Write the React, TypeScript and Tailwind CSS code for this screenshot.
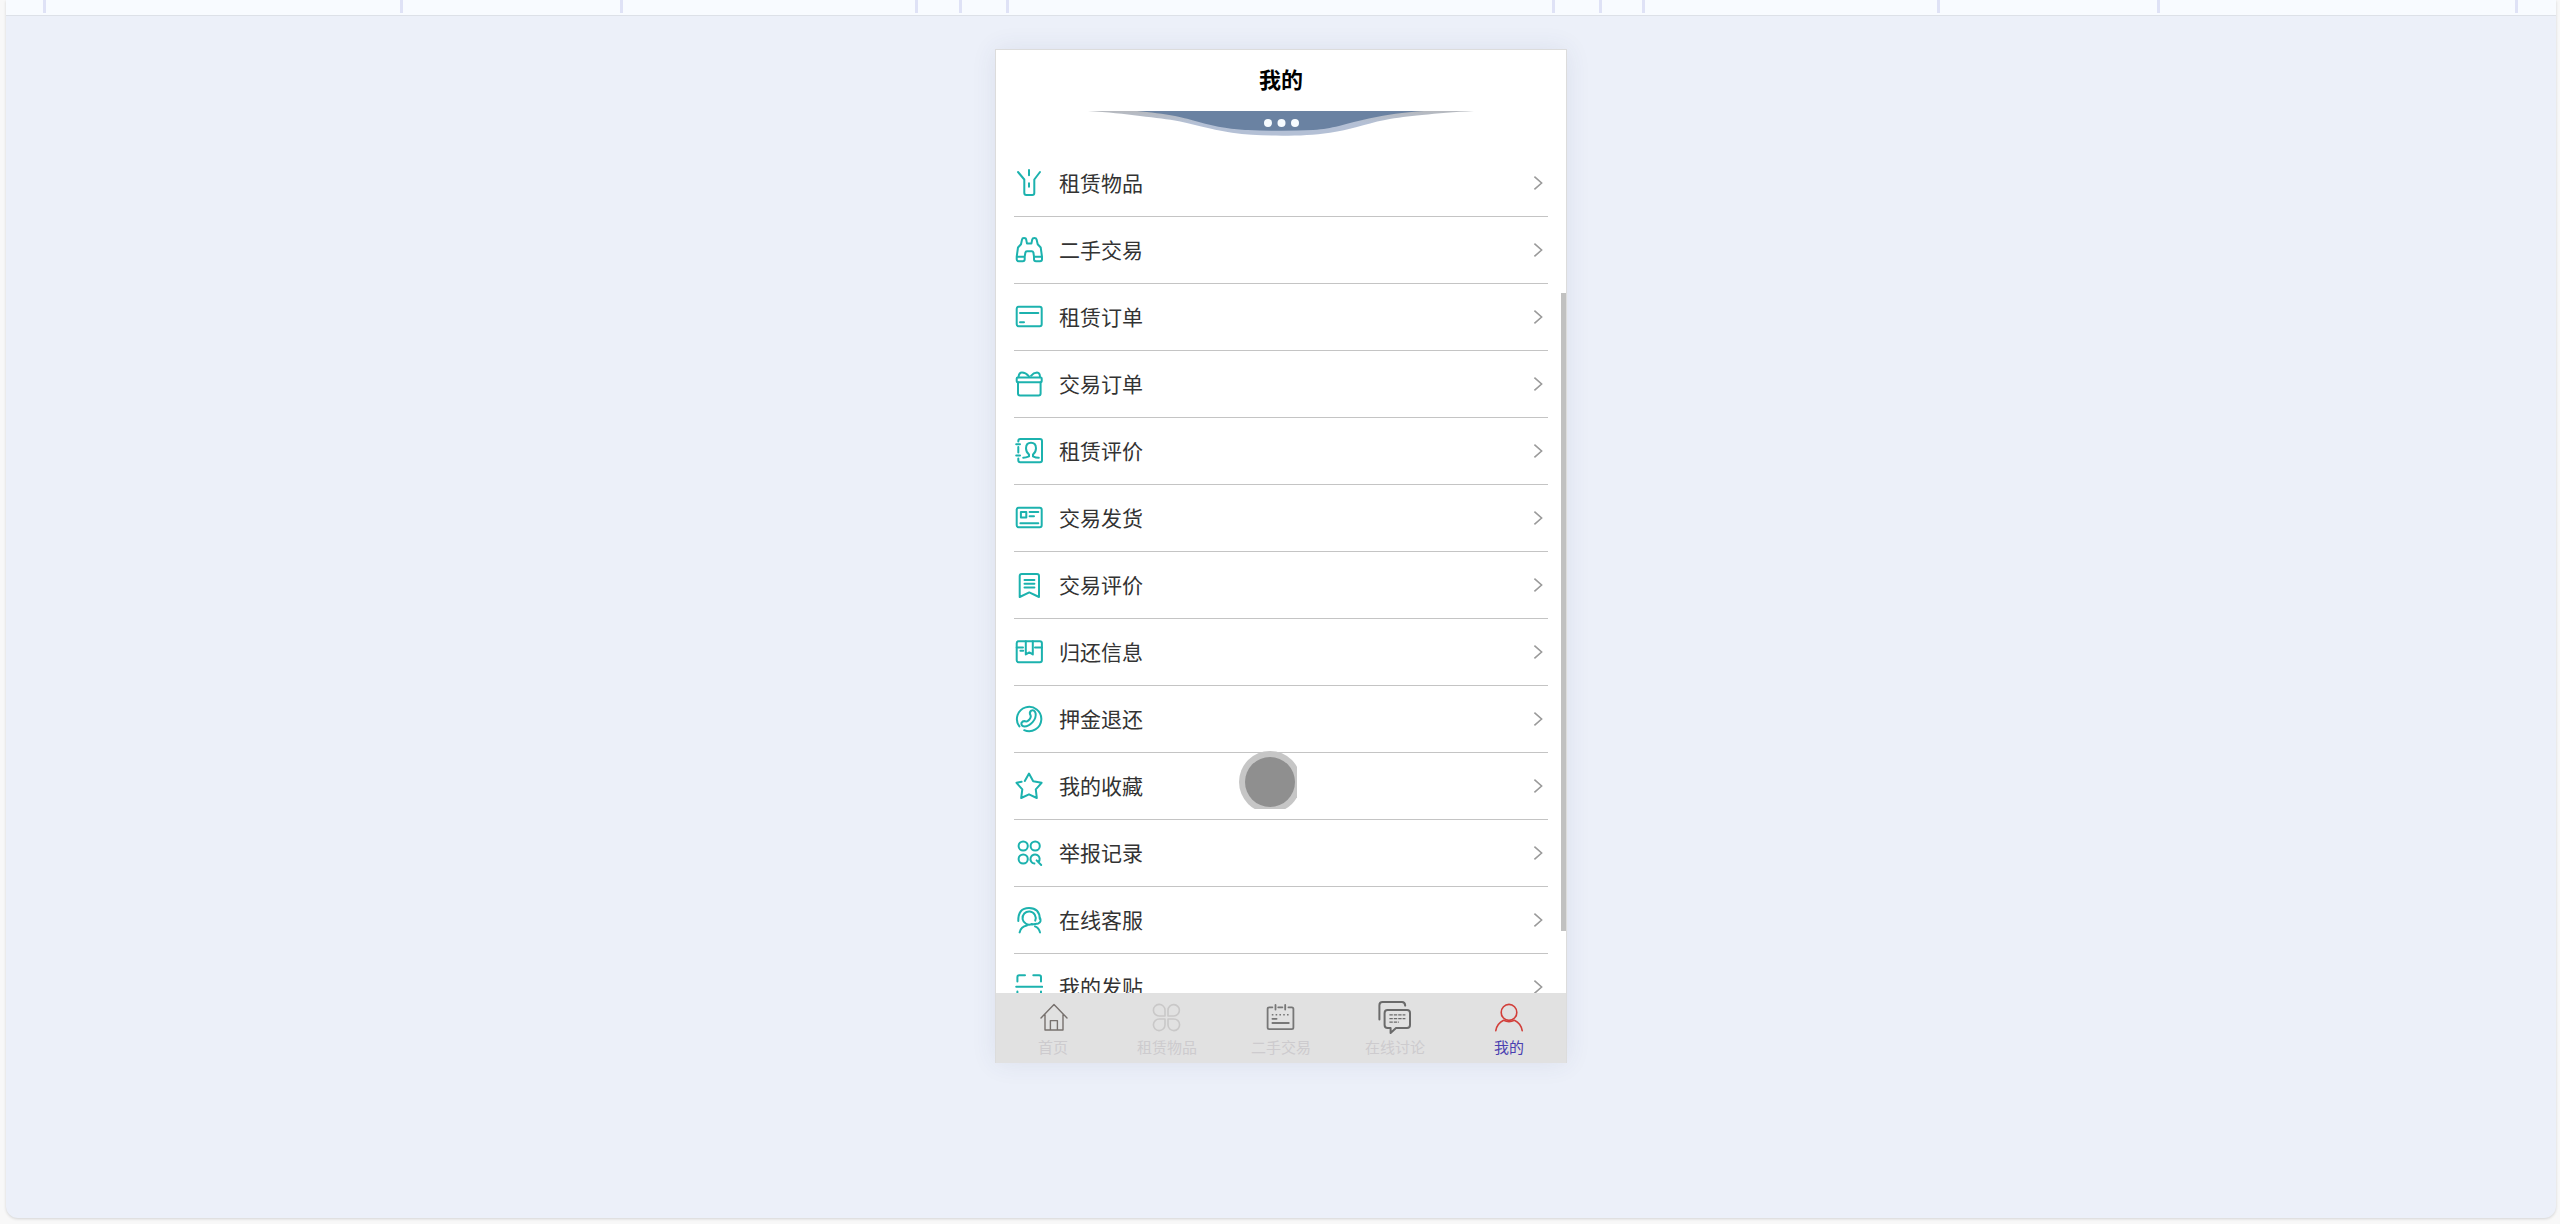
import React from 'react';

interface MenuItem {
  label: string;
  icon: React.ReactNode;
}

interface TabItem {
  label: string;
  icon: React.ReactNode;
  iconClass: string;
  active?: boolean;
}

const menuItems: MenuItem[] = [
  {
    label: '租赁物品',
    icon: (
      <path d="M3 3 L9.3 10.5 V24 Q9.3 26 11.3 26 H17.3 Q19.3 26 19.3 24 V10.5 L25 3 M14 1 V6.3 M14 14.3 V17.7" />
    ),
  },
  {
    label: '二手交易',
    icon: (
      <path d="M1.7 20.7 L3 11.5 L6 8.3 L7 3.6 Q7.2 2 9 2 Q11 2 11.2 3.6 L12 7.6 H15.6 M15 7.6 H16.4 L17.2 3.6 Q17.6 2 19.4 2 Q21.2 2 21.6 3.6 L22.7 8.3 L25.7 11.5 L27 20.7 V23.3 Q27 25.3 25 25.3 H21 Q19 25.3 19 23.3 V20.7 H27 M19 20.7 L18.4 16.5 Q18 15.3 16.8 15.3 H12 Q10.6 15.3 10.4 16.5 L9.7 20.7 V23.3 Q9.7 25.3 7.7 25.3 H3.7 Q1.7 25.3 1.7 23.3 V20.7 H9.7" />
    ),
  },
  {
    label: '租赁订单',
    icon: (
      <>
        <rect x="1.7" y="3.7" width="25" height="19.6" rx="2" />
        <path d="M5 10 H23.3 M5 19.3 H9" />
      </>
    ),
  },
  {
    label: '交易订单',
    icon: (
      <>
        <rect x="1.7" y="7.4" width="25" height="4.8" rx="1" />
        <path d="M3 12.2 V23.6 Q3 25.6 5 25.6 H23.6 Q25.6 25.6 25.6 23.6 V12.2 M3.5 7.2 Q4 2.6 7 2.6 Q10.5 2.6 14 6.4 M16 5.8 Q18.5 2.8 22 2.6 Q25 2.8 25 7.2" />
      </>
    ),
  },
  {
    label: '租赁评价',
    icon: (
      <>
        <path d="M3.3 4.6 V4 Q3.3 2 5.3 2 H25 Q27 2 27 4 V23.3 Q27 25.3 25 25.3 H5.3 Q3.3 25.3 3.3 23.3 V21.5 M3.3 10 V15.5 M1.2 7.3 H5 M1.2 18.4 H5" />
        <path d="M8.2 20.8 Q11 20.8 14 19.4 V17.6 Q11 15 11 11.2 Q11.2 5.8 16 5.8 Q20.8 5.8 21 11.2 Q21 15 18 17.6 V19.4 Q20.6 20.8 23.8 20.8" />
      </>
    ),
  },
  {
    label: '交易发货',
    icon: (
      <>
        <rect x="1.7" y="3.7" width="25" height="19.6" rx="2" />
        <rect x="5.9" y="8" width="5.4" height="5.4" />
        <path d="M14.6 8 H23.3 M14.6 12.2 H19 M5.4 19.2 H23.3" />
      </>
    ),
  },
  {
    label: '交易评价',
    icon: (
      <path d="M4.7 5 Q4.7 3 6.7 3 H22 Q24 3 24 5 V26 L14.3 21.4 L4.7 26 Z M9.5 9 H19.4 M9.5 12.8 H19.4 M9.5 16.6 H19.4" />
    ),
  },
  {
    label: '归还信息',
    icon: (
      <>
        <rect x="1.7" y="3.3" width="25.2" height="21" rx="2" />
        <path d="M1.7 9.4 H8 M20 9.4 H27 M5.4 12.8 H8.2 M10.8 3.3 V16.4 L14.3 14.4 L17.8 16.4 V3.3" />
      </>
    ),
  },
  {
    label: '押金退还',
    icon: (
      <>
        <path d="M4.4 21.4 A12.2 12.2 0 1 1 9.2 25.2" />
        <path d="M16.2 5.6 Q19.4 4.4 20.6 8.2 Q21.4 12.6 17.6 17.2 Q13.6 21.6 9.4 21.6 Q6 21 6.4 18 Q8 15.4 10.8 16.4 Q12 17.2 14.2 14.8 Q16.4 12 15.6 10.6 Q13.8 7.4 16.2 5.6 Z" />
      </>
    ),
  },
  {
    label: '我的收藏',
    icon: (
      <path d="M9.8 9 L14 1.5 L18.2 9.2 L26.6 10.8 L20.8 17.3 L21.8 26 L14 22.3 L6.2 26 L7.3 17.3 L1.5 10.8 L6.6 9.8" />
    ),
  },
  {
    label: '举报记录',
    icon: (
      <>
        <circle cx="8.2" cy="7" r="4.6" />
        <circle cx="20.2" cy="7" r="4.6" />
        <circle cx="8.2" cy="20" r="4.6" />
        <path d="M19.4 24.6 A4.6 4.6 0 1 1 23.4 23.2 M21.6 21.4 L26.2 26" />
      </>
    ),
  },
  {
    label: '在线客服',
    icon: (
      <>
        <path d="M3.3 15 Q3 2 14 2 Q24.6 2 24.8 13 M24.8 11.6 Q27 15.6 23.4 17.4 L17 18.6" />
        <path d="M17 18 A6.6 6.6 0 1 1 20.2 14.6 M4.6 26.4 Q6 20.6 11.8 19.6 M20 20.4 Q24 22 25 26.4" />
      </>
    ),
  },
  {
    label: '我的发贴',
    icon: (
      <path d="M2.4 8.6 V4 Q2.4 2.2 4.2 2.2 H10 M18.3 2.2 H24.2 Q26 2.2 26 4 V8.6 M1.2 13.7 H27.2 M2.4 18.6 V23.6 Q2.4 25.4 4.2 25.4 H10 M18.3 25.4 H24.2 Q26 25.4 26 23.6 V18.6" />
    ),
  },
];

const tabItems: TabItem[] = [
  {
    label: '首页',
    iconClass: 'text-[#77716e]',
    icon: (
      <path strokeWidth="1.4" d="M4 17 L17 3.4 L30 17 M8 13.4 V29 H26 V13.4 M13.4 29 V19.6 H20.4 V29" />
    ),
  },
  {
    label: '租赁物品',
    iconClass: 'text-[#c9c8c8]',
    icon: (
      <path
        strokeWidth="1.6"
        d="M14 15 H8.4 A5.8 5.8 0 1 1 14 9 Z M17 15 V9 A5.7 5.7 0 1 1 22.8 15 Z M14 18 V24 A5.8 5.8 0 1 1 8.4 18 Z M17 18 H22.8 A5.8 5.8 0 1 1 17 24 Z"
      />
    ),
  },
  {
    label: '二手交易',
    iconClass: 'text-[#777777]',
    icon: (
      <>
        <path
          strokeWidth="1.8"
          d="M7.4 6.3 H4.2 Q2.6 6.3 2.6 7.9 V26.6 Q2.6 28.2 4.2 28.2 H26.8 Q28.4 28.2 28.4 26.6 V7.9 Q28.4 6.3 26.8 6.3 H23.4 M10.5 4 V8.6 M20.2 4 V8.6 M13.2 6.3 H17.4 M7.4 17.8 H11.6 M7.4 22 H23.8"
        />
        <path strokeWidth="1.6" strokeDasharray="1.6 2.2" strokeLinecap="butt" d="M6.8 13.7 H24.4" />
      </>
    ),
  },
  {
    label: '在线讨论',
    iconClass: 'text-[#6b6b6b]',
    icon: (
      <>
        <path
          strokeWidth="2"
          d="M0.4 18.4 V4.2 Q0.4 1 3.6 1 H23 Q26 1 26.2 4.6 M8.6 9 H28 Q31 9 31 12 V24 Q31 27 28 27 H17 L11.6 32 V27 H8.6 Q5.6 27 5.6 24 V12 Q5.6 9 8.6 9 Z"
        />
        <path strokeWidth="1.3" strokeDasharray="3.4 1" strokeLinecap="butt" d="M10.4 13.8 H26.4 M10.4 17.6 H26.4 M10.4 21.2 H20" />
      </>
    ),
  },
  {
    label: '我的',
    iconClass: 'text-[#d23f3a]',
    active: true,
    icon: (
      <>
        <ellipse cx="16" cy="11.4" rx="7.8" ry="8" strokeWidth="1.6" />
        <path strokeWidth="1.6" d="M2.8 29.6 Q4 22.4 10.6 19.2 Q16 22 21.4 19.2 Q28 22.4 29.2 29.6" />
      </>
    ),
  },
];

const HeaderStrip: React.FC = () => (
  <div className="h-4 shrink-0 border-b border-[#dde1e8] bg-[#f8fbff] pb-0.5">
    <div className="grid h-full grid-cols-[40fr_357fr_220fr_295fr_44fr_47fr_547fr_47fr_43fr_295fr_220fr_358fr_38fr] divide-x-3 divide-[#dfe2f6]">
      {Array.from({ length: 13 }, (_, i) => (
        <div key={i} />
      ))}
    </div>
  </div>
);

const Wave: React.FC = () => (
  <svg className="mx-auto h-[25px] w-[386px]" viewBox="0 0 386 25" aria-hidden="true">
    <defs>
      <linearGradient id="edge" x1="0" y1="0" x2="0" y2="1">
        <stop offset="0" stopColor="#b6b9be" />
        <stop offset="0.5" stopColor="#b4c0d5" />
      </linearGradient>
    </defs>
    <path
      fill="url(#edge)"
      d="M0 0 C20 1 36 3 52 5 C68 7 80 8 91 10.3 C102 12.6 110 15 121 17.3 C130 19.5 136 20.6 144 21.7 C160 24 176 24.7 194 24.7 C212 24.7 226 24 242 21.7 C252 20 260 18.6 268 16.3 C278 13.6 286 11 297 9 C310 6.4 320 5.6 334 4 C350 2.4 366 1 386 0 Z"
    />
    <path
      fill="#6a82a2"
      d="M49 0 C62 1 76 3 87 5 C97 7 102 8.6 110 10.7 C120 13.4 128 15.4 137 16.7 C146 18.2 152 18.6 160 19 C182 20 204 20 225 19 C236 18.2 242 17 251 15 C262 12.2 272 9.4 282 7.3 C300 3.6 314 1.4 336 0 Z"
    />
    <circle cx="180" cy="12" r="4" fill="#f6fbff" />
    <circle cx="193.5" cy="12" r="4" fill="#f6fbff" />
    <circle cx="207" cy="12" r="4" fill="#f6fbff" />
  </svg>
);

const MenuRow: React.FC<{ item: MenuItem }> = ({ item }) => (
  <li className="border-b border-[#c4c4c4]">
    <button type="button" className="flex h-[66px] w-full items-center pb-px text-left">
      <svg
        className="ml-px size-7 shrink-0 text-[#1cb2ae]"
        viewBox="0 0 28 28"
        fill="none"
        stroke="currentColor"
        strokeWidth="2"
        strokeLinecap="round"
        strokeLinejoin="round"
        aria-hidden="true"
      >
        {item.icon}
      </svg>
      <span className="ml-4 flex-1 pb-0.5 text-[21px] leading-7 text-[#333333]">{item.label}</span>
      <svg
        className="mr-1 h-4 w-3 shrink-0 text-[#9a9a9a]"
        viewBox="0 0 12 16"
        fill="none"
        stroke="currentColor"
        strokeWidth="1.6"
        aria-hidden="true"
      >
        <path d="M2.4 1.6 L9.6 8 L2.4 14.4" />
      </svg>
    </button>
  </li>
);

const TabBar: React.FC = () => (
  <nav className="flex h-[70px] shrink-0 bg-[#e1e1e1]">
    {tabItems.map((tab) => (
      <button key={tab.label} type="button" className="flex flex-1 flex-col items-center gap-1 pt-2">
        <svg
          className={`size-8 shrink-0 overflow-visible ${tab.iconClass}`}
          viewBox="0 0 32 32"
          fill="none"
          stroke="currentColor"
          strokeLinecap="round"
          strokeLinejoin="round"
          aria-hidden="true"
        >
          {tab.icon}
        </svg>
        <span className={`text-[15px] leading-5 ${tab.active ? 'text-[#4a3fb0]' : 'text-[#cdcbce]'}`}>{tab.label}</span>
      </button>
    ))}
  </nav>
);

const App: React.FC = () => {
  return (
    <div className="flex h-screen flex-col bg-[#f8f8f8] pr-1 pb-1.5 pl-1.5 font-['Noto_Sans_CJK_SC',sans-serif]">
      <div className="flex min-h-0 flex-1 flex-col rounded-b-xl bg-[#ecf0f9] shadow-[0_1px_3px_rgba(0,0,0,0.15)]">
        <HeaderStrip />
        <main className="relative mx-auto mt-[33px] mb-[155px] flex min-h-0 w-full max-w-[572px] flex-1 flex-col border border-b-0 border-[#dcdcdc] bg-white shadow-[0_0_24px_rgba(60,70,110,0.09)]">
          <h1 className="pt-3.5 pb-[18px] text-center text-[22px] leading-[29px] font-bold text-black">我的</h1>
          <Wave />
          <ul className="mt-3.5 min-h-0 flex-1 overflow-hidden px-[18px]">
            {menuItems.map((item) => (
              <MenuRow key={item.label} item={item} />
            ))}
          </ul>
          <TabBar />

          {/* Barra de desplazamiento */}
          <div className="absolute top-[24%] right-0 h-[63%] w-[5px] bg-[#c1c1c1]" />

          {/* Puntero táctil */}
          <div className="absolute top-[701px] left-[243px] size-[58px] overflow-hidden">
            <div className="flex size-[62px] items-center justify-center rounded-full bg-[#c6c6c6]">
              <div className="size-[50px] rounded-full bg-[#8f8f8f]" />
            </div>
          </div>
        </main>
      </div>
    </div>
  );
};

export default App;
